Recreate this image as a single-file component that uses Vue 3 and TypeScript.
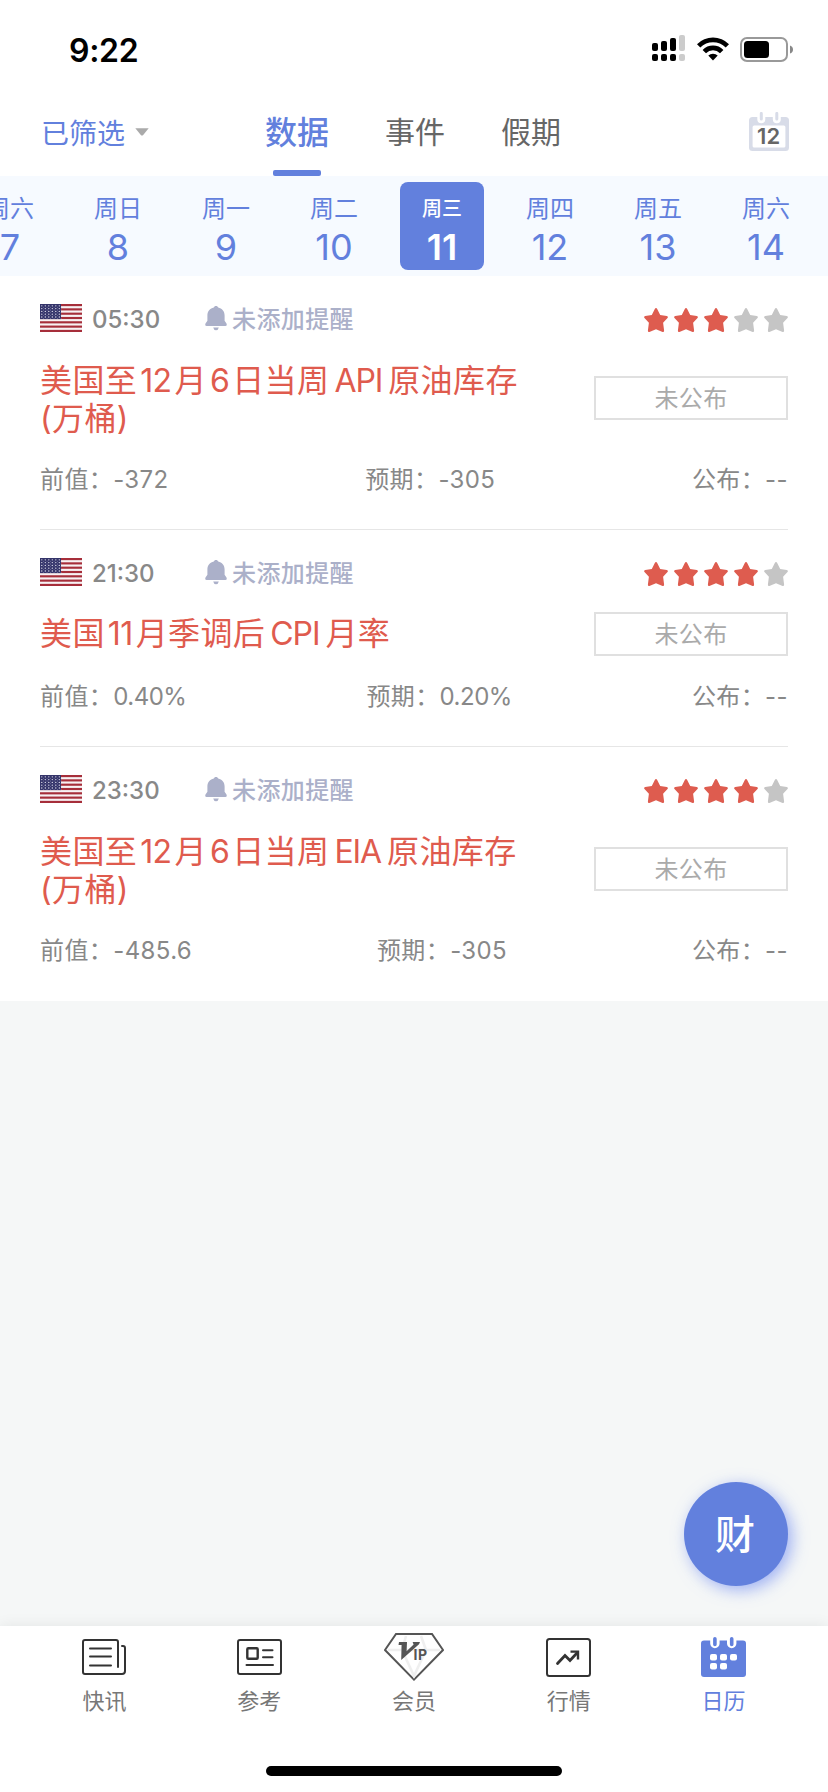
<script setup lang="ts">
interface Segment {
  text: string
  kind?: 'latin' | 'digit'
}
interface Day {
  week: string
  num: string
  active?: boolean
}
interface EventItem {
  time: string
  stars: number
  title: Segment[][]
  previous: string
  forecast: string
  actual: string
}

const days: Day[] = [
  { week: '周六', num: '7' },
  { week: '周日', num: '8' },
  { week: '周一', num: '9' },
  { week: '周二', num: '10' },
  { week: '周三', num: '11', active: true },
  { week: '周四', num: '12' },
  { week: '周五', num: '13' },
  { week: '周六', num: '14' },
]

const events: EventItem[] = [
  {
    time: '05:30',
    stars: 3,
    title: [
      [
        { text: '美国至' }, { text: '12', kind: 'digit' }, { text: '月' }, { text: '6', kind: 'digit' },
        { text: '日当周' }, { text: 'API', kind: 'latin' }, { text: '原油库存' },
      ],
      [{ text: '(万桶)' }],
    ],
    previous: '-372',
    forecast: '-305',
    actual: '--',
  },
  {
    time: '21:30',
    stars: 4,
    title: [
      [
        { text: '美国' }, { text: '11', kind: 'digit' }, { text: '月季调后' },
        { text: 'CPI', kind: 'latin' }, { text: '月率' },
      ],
    ],
    previous: '0.40%',
    forecast: '0.20%',
    actual: '--',
  },
  {
    time: '23:30',
    stars: 4,
    title: [
      [
        { text: '美国至' }, { text: '12', kind: 'digit' }, { text: '月' }, { text: '6', kind: 'digit' },
        { text: '日当周' }, { text: 'EIA', kind: 'latin' }, { text: '原油库存' },
      ],
      [{ text: '(万桶)' }],
    ],
    previous: '-485.6',
    forecast: '-305',
    actual: '--',
  },
]

const fields = (ev: EventItem) => [
  { label: '前值：', value: ev.previous },
  { label: '预期：', value: ev.forecast },
  { label: '公布：', value: ev.actual },
]

const canton = Array.from({ length: 5 }, (_, row) =>
  Array.from({ length: 6 }, (_, col) => ({ x: 1.8 + col * 3.5, y: 1.8 + row * 2.8 })),
).flat()
</script>

<template>
  <div class="app">
    <div class="status">
      <span class="clock">9:22</span>
      <div class="status-icons">
        <svg class="signal" width="33" height="26" viewBox="0 0 33 26">
          <rect x="0" y="8" width="6" height="8" rx="2" />
          <rect x="9" y="6" width="6" height="10" rx="2" />
          <rect x="18" y="3" width="6" height="13" rx="2" />
          <rect x="27" y="0" width="6" height="16" rx="2" fill="#ccc" />
          <rect x="0" y="19" width="6" height="7" rx="2" />
          <rect x="9" y="19" width="6" height="7" rx="2" />
          <rect x="18" y="19" width="6" height="7" rx="2" />
          <rect x="27" y="19" width="6" height="7" rx="2" fill="#ccc" />
        </svg>
        <svg class="wifi" width="32" height="24" viewBox="0 0 32 24">
          <path d="M0 7.2A22.5 22.5 0 0 1 32 7.2L28.7 10.5A18 18 0 0 0 3.3 10.5Z" />
          <path d="M5.6 12.9A14.7 14.7 0 0 1 26.4 12.9L23 16.2A10 10 0 0 0 9 16.2Z" />
          <path d="M11.3 18.6A6.7 6.7 0 0 1 20.7 18.6L16 23.6Z" />
        </svg>
        <svg class="battery" width="54" height="25" viewBox="0 0 54 25">
          <rect x="1" y="1" width="46" height="23" rx="6" fill="none" stroke="#999" stroke-width="2" />
          <rect x="4" y="4" width="25" height="17" rx="3.5" />
          <path d="M50 8.5Q53 9.5 53 12.5T50 16.5Z" fill="#888" />
        </svg>
      </div>
    </div>

    <header class="nav">
      <div class="filter">
        <span>已筛选</span>
        <svg width="14" height="8" viewBox="0 0 14 8"><path d="M.3 .3H13.7L8.2 7Q7 8.2 5.8 7Z" fill="#aaa" /></svg>
      </div>
      <nav class="tabs">
        <span class="tab current">数据</span>
        <span class="tab">事件</span>
        <span class="tab">假期</span>
      </nav>
      <svg class="today" width="40" height="40" viewBox="0 0 40 40">
        <rect x="0" y="5" width="40" height="34" rx="3.5" fill="#d8dce8" />
        <rect x="3.6" y="13.5" width="32.8" height="22" rx="1.5" fill="#fff" />
        <path d="M8.3 4V7.3a4 4 0 0 0 8 0V4ZM23.8 4V7.3a4 4 0 0 0 8 0V4Z" fill="#fff" />
        <path d="M12.3 1.4V7M27.8 1.4V7" stroke="#d8dce8" stroke-width="3" stroke-linecap="round" />
        <text x="19.6" y="32.4" text-anchor="middle">12</text>
      </svg>
    </header>

    <div class="strip">
      <div v-for="(day, i) in days" :key="i" class="day" :class="{ active: day.active }">
        <div class="day-box">
          <span class="week">{{ day.week }}</span>
          <span class="num">{{ day.num }}</span>
        </div>
      </div>
    </div>

    <main class="list">
      <article v-for="(ev, i) in events" :key="i" class="event">
        <div class="meta">
          <svg class="flag" width="42" height="28" viewBox="0 0 42 28">
            <rect width="42" height="28" fill="#f7f2f4" />
            <rect v-for="n in 7" :key="n" x="0" :y="(n - 1) * 4.31" width="42" height="2.15" fill="#a62e3a" />
            <rect width="21" height="15.1" fill="#34346a" />
            <circle v-for="(s, k) in canton" :key="'a' + k" :cx="s.x" :cy="s.y" r=".65" fill="#e4e4f0" />
            <circle v-for="(s, k) in canton" :key="'b' + k" :cx="s.x + 1.75" :cy="s.y + 1.4" r=".4" fill="#b9b9d2" />
          </svg>
          <span class="time">{{ ev.time }}</span>
          <svg class="bell" width="22" height="25" viewBox="0 0 22 25">
            <path d="M11 0C12.2 0 12.9 .6 13.2 1.6C17 2.4 19.6 5.4 19.6 9.5V14.8L21.5 17.5Q22.4 20 20.3 20H1.7Q-.4 20 .5 17.5L2.4 14.8V9.5C2.4 5.4 5 2.4 8.8 1.6C9.1 .6 9.8 0 11 0Z" />
            <path d="M8.2 21.5H13.8Q13.2 24.2 11 24.2T8.2 21.5Z" />
          </svg>
          <span class="remind">未添加提醒</span>
          <div class="stars">
            <svg v-for="n in 5" :key="n" width="24" height="24" viewBox="0 0 24 24" :class="{ lit: n <= ev.stars }">
              <path d="M12 0Q12.7 0 13.2 1L16.2 6.9L22.8 7.9Q24.6 8.6 23.5 10L19.1 14.7L20.1 22.4Q20.1 24.4 18.6 23.9L12 21.3L5.4 23.9Q3.9 24.4 3.9 22.4L4.9 14.7L.5 10Q-.6 8.6 1.2 7.9L7.8 6.9L10.8 1Q11.3 0 12 0Z" />
            </svg>
          </div>
        </div>
        <div class="body">
          <h2 class="title" :class="{ multi: ev.title.length > 1 }">
            <span v-for="(line, l) in ev.title" :key="l" class="line"><span v-for="(seg, s) in line" :key="s" :class="seg.kind">{{ seg.text }}</span></span>
          </h2>
          <div class="state">未公布</div>
        </div>
        <div class="values">
          <span v-for="f in fields(ev)" :key="f.label">{{ f.label }}<span :class="{ percent: f.value.endsWith('%') }">{{ f.value }}</span></span>
        </div>
      </article>
    </main>

    <div class="blank"></div>
    <button class="fab">财</button>

    <footer class="bar">
      <div class="items">
        <div class="item">
          <div class="icon">
            <svg width="44" height="36" viewBox="0 0 44 36" fill="none" stroke="#333" stroke-width="2" stroke-linecap="round">
              <path d="M36 28V3Q36 1 34 1H3Q1 1 1 3V33Q1 35 3 35H40Q43 35 43 32V9Q43 7 41 7H40" />
              <path d="M8 9.5H29M8 17.5H29M8 26.5H29" />
            </svg>
          </div>
          <span>快讯</span>
        </div>
        <div class="item">
          <div class="icon">
            <svg width="45" height="36" viewBox="0 0 45 36" fill="none" stroke="#333" stroke-width="2" stroke-linecap="round">
              <rect x="1" y="1" width="43" height="34" rx="2" />
              <rect x="10.3" y="9.3" width="10.4" height="10.4" rx="1" stroke-width="2.4" />
              <path d="M26 11.3H35.5M26 18.3H35.5M9.5 26H36" />
            </svg>
          </div>
          <span>参考</span>
        </div>
        <div class="item">
          <div class="icon">
            <svg width="60" height="48" viewBox="0 0 60 48">
              <path d="M12 1H48L59 17L30 46.6L1 17Z" fill="#fff" stroke="#555" stroke-width="2" />
              <path d="M4 17H56M22 3L18 17L30 43L42 17L37 3" fill="none" stroke="#efefef" stroke-width="2.6" />
              <path d="M15 9H23L22.6 18.2L29.6 11.4L28.6 9H36L35 11.2L17.2 27L17.6 12H14.5Z" fill="#555" />
              <text x="29.6" y="27.3" class="ip">IP</text>
            </svg>
          </div>
          <span>会员</span>
        </div>
        <div class="item">
          <div class="icon">
            <svg width="45" height="39" viewBox="0 0 45 39" fill="none" stroke="#333" stroke-width="2">
              <rect x="1" y="1" width="43" height="37" rx="2.5" />
              <path d="M11.5 25.5L19 17.5L24 22.5L31 15" stroke-width="2.8" stroke-linecap="round" />
              <path d="M24.5 13.6H32V21.5" stroke-width="2.4" />
            </svg>
          </div>
          <span>行情</span>
        </div>
        <div class="item on">
          <div class="icon">
            <svg width="45" height="40" viewBox="0 0 45 40">
              <rect x="0" y="3.5" width="45" height="36.5" rx="3" fill="#6280dd" />
              <path d="M9.2 3V6.5a4.7 4.7 0 0 0 9.4 0V3ZM26 3V6.5a4.7 4.7 0 0 0 9.4 0V3Z" fill="#fff" />
              <path d="M13.9 1.8V7.5M30.7 1.8V7.5" stroke="#6280dd" stroke-width="3.6" stroke-linecap="round" />
              <g fill="#fff">
                <rect x="9" y="17" width="7" height="6.5" rx="2" /><rect x="19" y="17" width="7" height="6.5" rx="2" />
                <rect x="29" y="17" width="7" height="6.5" rx="2" /><rect x="9" y="26" width="7" height="6.5" rx="2" />
                <rect x="19" y="26" width="7" height="6.5" rx="2" />
              </g>
            </svg>
          </div>
          <span>日历</span>
        </div>
      </div>
      <div class="home"></div>
    </footer>
  </div>
</template>

<style>
body {
  background: #fff;
}
</style>

<style scoped>
.app {
  position: relative;
  display: flex;
  flex-direction: column;
  width: 828px;
  height: 1792px;
  overflow: hidden;
  background: #fff;
  font-family: Inter, 'Noto Sans CJK SC', sans-serif;
}
svg {
  display: block;
  flex: none;
}
.status {
  display: flex;
  justify-content: space-between;
  height: 88px;
  box-sizing: border-box;
  padding: 35px 34px 0 69px;
}
.clock {
  font-size: 32px;
  font-weight: 600;
  line-height: 31px;
  letter-spacing: -0.3px;
  color: #000;
}
.status-icons {
  display: flex;
  align-items: flex-start;
}
.wifi {
  margin: 2px 11px 0 12px;
}
.battery {
  margin-top: 2px;
}
.nav {
  display: flex;
  align-items: center;
  height: 88px;
  box-sizing: border-box;
  padding: 0 39px 0 41px;
}
.filter {
  display: flex;
  align-items: center;
  gap: 10px;
  width: 224px;
  font-size: 28px;
  color: #6280dd;
}
.tabs {
  display: flex;
  flex: 1;
  gap: 56px;
  align-self: stretch;
}
.tab {
  display: flex;
  flex-direction: column;
  align-items: center;
  font-size: 30px;
  line-height: 89px;
  color: #666;
}
.current {
  font-size: 32px;
  font-weight: 500;
  color: #6280dd;
  line-height: 89px;
}
.current::after {
  content: '';
  width: 48px;
  height: 6px;
  margin-top: -7px;
  border-radius: 2px;
  background: #6280dd;
}
.today text {
  font-size: 22px;
  font-weight: 600;
  fill: #666;
}
.strip {
  display: flex;
  height: 100px;
  flex: none;
  margin-left: -44px;
  width: 872px;
  background: #f6faff;
  color: #6280dd;
}
.day {
  display: flex;
  justify-content: center;
  flex: none;
  width: 108px;
  padding-top: 6px;
}
.day-box {
  display: flex;
  flex-direction: column;
  align-items: center;
  width: 84px;
  height: 88px;
  border-radius: 8px;
}
.week {
  margin-top: 12px;
  font-size: 24px;
  line-height: 30px;
}
.num {
  margin-top: 3px;
  font-size: 36px;
  line-height: 40px;
}
.active .day-box {
  background: #6280dd;
  color: #fff;
}
.active .week {
  font-size: 20px;
  font-weight: 500;
}
.active .num {
  font-weight: 600;
}
.list {
  flex: none;
  padding: 0 40px;
}
.event {
  padding: 28px 0 34px;
  border-bottom: 1px solid #e6e6e6;
}
.event:last-child {
  border-bottom-color: transparent;
}
.meta {
  display: flex;
  height: 28px;
  align-items: flex-start;
  line-height: 32px;
  font-size: 24px;
}
.time {
  width: 113px;
  margin-left: 10px;
  font-weight: 500;
  color: #888;
}
.bell {
  margin-top: 2px;
  fill: #abb0c9;
}
.remind {
  margin-left: 5px;
  font-weight: 500;
  letter-spacing: 0.4px;
  color: #abb0c9;
}
.stars {
  display: flex;
  gap: 6px;
  margin: 4px 0 0 auto;
  fill: #c5c5c5;
}
.lit {
  fill: #de5c4f;
}
.body {
  display: flex;
  justify-content: space-between;
  align-items: center;
  min-height: 39px;
  margin: 28px 0;
}
.title {
  margin: 0;
  font-size: 32px;
  font-weight: 400;
  line-height: 38px;
  letter-spacing: 0.4px;
  color: #df5b4e;
}
.multi {
  margin: 1.5px 0 -1.5px;
}
.line {
  display: block;
  white-space: nowrap;
}
.latin {
  margin: 0 6px 0 5px;
  letter-spacing: -1.1px;
}
.digit {
  margin: 0 3px;
  letter-spacing: -0.6px;
  font-kerning: none;
}
.state {
  width: 194px;
  height: 44px;
  margin: -4px 0;
  box-sizing: border-box;
  border: 2px solid #e0e0e0;
  font-size: 24px;
  line-height: 41px;
  letter-spacing: 0.3px;
  text-align: center;
  color: #aaa;
}
.values {
  display: flex;
  justify-content: space-between;
  height: 31px;
  font-size: 24px;
  line-height: 32px;
  letter-spacing: 0.4px;
  color: #888;
}
.percent {
  letter-spacing: -0.5px;
}
.blank {
  flex: 1;
  background: #f5f7f7;
}
.fab {
  position: absolute;
  right: 40px;
  bottom: 206px;
  width: 104px;
  height: 104px;
  padding: 0 2px 0 0;
  border: 0;
  border-radius: 50%;
  background: #6280dd;
  box-shadow: 4px 4px 16px rgba(98, 128, 240, 0.6);
  font: 500 40px/106px Inter, 'Noto Sans CJK SC', sans-serif;
  color: #fff;
}
.bar {
  position: relative;
  display: flex;
  flex-direction: column;
  align-items: center;
  height: 166px;
  background: #fff;
  box-shadow: 0 0 14px rgba(0, 0, 0, 0.08);
}
.items {
  display: flex;
  width: 774px;
  height: 140px;
}
.item {
  flex: 1;
  display: flex;
  flex-direction: column;
  align-items: center;
  font-size: 22px;
  line-height: 28px;
  color: #777;
}
.icon {
  display: flex;
  align-items: center;
  height: 48px;
  margin: 7px 0 6px;
}
.on {
  color: #6280dd;
}
.ip {
  font-size: 14px;
  font-weight: 700;
  letter-spacing: 0.6px;
  fill: #555;
}
.home {
  width: 296px;
  height: 10px;
  border-radius: 5px;
  background: #000;
}
</style>
